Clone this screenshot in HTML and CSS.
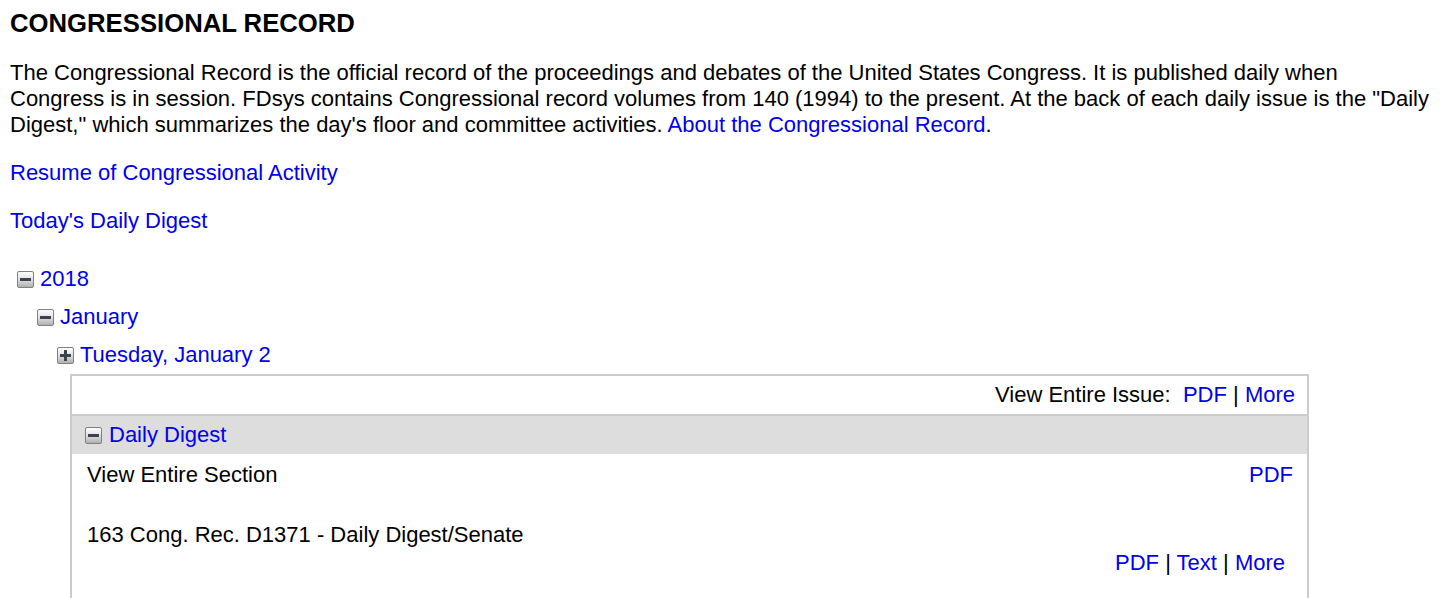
FILE: index.html
```html
<!DOCTYPE html>
<html>
<head>
<meta charset="utf-8">
<title>Congressional Record</title>
<link rel="stylesheet" href="styles.css">
</head>
<body>
<h1 class="title">CONGRESSIONAL RECORD</h1>
<p class="intro">The Congressional Record is the official record of the proceedings and debates of the United States Congress. It is published daily when<br>Congress is in session. FDsys contains Congressional record volumes from 140 (1994) to the present. At the back of each daily issue is the "Daily<br>Digest," which summarizes the day's floor and committee activities. <a href="#">About the Congressional Record</a>.</p>
<p class="navlink"><a href="#">Resume of Congressional Activity</a></p>
<p class="navlink"><a href="#">Today's Daily Digest</a></p>

<div class="tree">
  <div class="node lvl1"><span class="tog minus"></span><a href="#">2018</a></div>
  <div class="node lvl2"><span class="tog minus"></span><a href="#">January</a></div>
  <div class="node lvl3"><span class="tog plus"></span><a href="#">Tuesday, January 2</a></div>
  <div class="issue">
    <div class="issue-head">View Entire Issue:&nbsp; <a href="#">PDF</a> | <a href="#">More</a></div>
    <div class="section-head"><span class="tog minus"></span><a href="#">Daily Digest</a></div>
    <div class="row">
      <span>View Entire Section</span>
      <a href="#">PDF</a>
    </div>
    <div class="entry">
      <div class="entry-title">163 Cong. Rec. D1371 - Daily Digest/Senate</div>
      <div class="entry-links"><a href="#">PDF</a> | <a href="#">Text</a> | <a href="#">More</a></div>
    </div>
  </div>
</div>
</body>
</html>
```
FILE: styles.css
```css
html, body {
  margin: 0;
  padding: 0;
  background: #fff;
}
body {
  padding: 0 10px;
  font-family: "Liberation Sans", Arial, Helvetica, sans-serif;
  font-size: 22px;
  color: #000;
}
a {
  color: #0000ee;
  text-decoration: none;
}
.title {
  font-size: 25.7px;
  font-weight: bold;
  margin: 9px 0 0 0;
  line-height: 28px;
}
.intro {
  margin: 23px 0 0 0;
  line-height: 26px;
  white-space: nowrap;
}
.navlink {
  margin: 22px 0 0 0;
  line-height: 25px;
}
.navlink + .navlink {
  margin-top: 23px;
}
.tree {
  margin-top: 27px;
}
.node {
  display: flex;
  align-items: center;
  height: 38px;
}
.lvl1 { padding-left: 7px; }
.lvl2 { padding-left: 27px; }
.lvl3 { padding-left: 47px; }
.tog {
  display: inline-block;
  position: relative;
  width: 15px;
  height: 15px;
  border: 1px solid #808080;
  border-radius: 2px;
  background: linear-gradient(#fdfdfd, #e0e0e0 50%, #b0b0b0);
  margin-right: 6px;
  box-sizing: content-box;
  flex: none;
}
.tog::before {
  content: "";
  position: absolute;
  left: 2px;
  top: 6px;
  width: 11px;
  height: 3px;
  background: #3a4250;
}
.plus::after {
  content: "";
  position: absolute;
  left: 6px;
  top: 2px;
  width: 3px;
  height: 11px;
  background: #3a4250;
}
.issue {
  margin: 0 0 0 60px;
  width: 1235px;
  border: 2px solid #cccccc;
  border-bottom: none;
}
.issue-head {
  text-align: right;
  padding: 0 12px;
  line-height: 38px;
  border-bottom: 2px solid #cccccc;
}
.section-head {
  display: flex;
  align-items: center;
  background: #dddddd;
  height: 38px;
  padding-left: 13px;
}
.section-head .tog {
  margin-right: 7px;
}
.row {
  display: flex;
  justify-content: space-between;
  padding: 0 14px 0 15px;
  line-height: 42px;
}
.entry {
  padding: 27px 22px 20px 15px;
}
.entry-title {
  line-height: 23px;
}
.entry-links {
  text-align: right;
  line-height: 33px;
}
```
